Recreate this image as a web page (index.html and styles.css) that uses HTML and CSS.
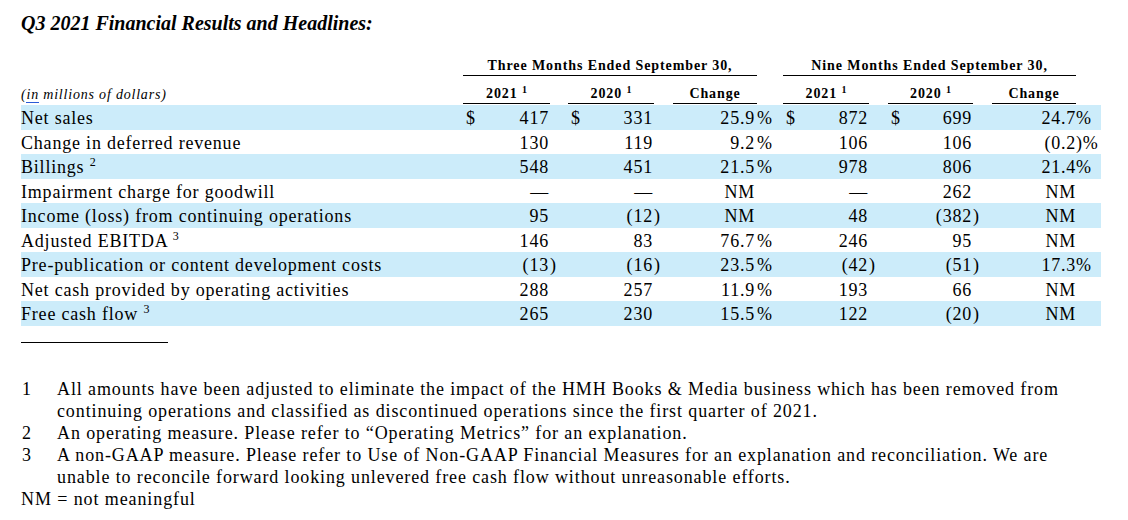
FILE: index.html
```html
<!DOCTYPE html>
<html>
<head>
<meta charset="utf-8">
<link rel="stylesheet" href="styles.css">
</head>
<body>
<div class="page">
  <h1 class="title">Q3 2021 Financial Results and Headlines:</h1>
  <table class="fin">
    <colgroup>
      <col class="c-label"><col class="c-num1"><col class="c-gap1"><col class="c-num2"><col class="c-gap2"><col class="c-chg"><col class="c-pct">
      <col class="c-num3"><col class="c-gap3"><col class="c-num4"><col class="c-gap4"><col class="c-chg2"><col class="c-pct2">
    </colgroup>
    <thead>
      <tr class="hr1">
        <th></th>
        <th colspan="5"><div class="ul">Three Months Ended September 30,</div></th>
        <th></th>
        <th colspan="5"><div class="ul">Nine Months Ended September 30,</div></th>
        <th></th>
      </tr>
      <tr class="hr2">
        <th class="units"><span class="mark">in</span> millions of dollars)</th>
        <th><div class="ul">2021 <sup>1</sup></div></th>
        <th></th>
        <th><div class="ul">2020 <sup>1</sup></div></th>
        <th></th>
        <th><div class="ul">Change</div></th>
        <th></th>
        <th><div class="ul">2021 <sup>1</sup></div></th>
        <th></th>
        <th><div class="ul">2020 <sup>1</sup></div></th>
        <th></th>
        <th><div class="ul">Change</div></th>
        <th></th>
      </tr>
    </thead>
    <tbody>
      <tr class="shade">
        <td class="label">Net sales</td>
        <td class="num"><span class="cur">$</span>417</td><td class="sfx"></td>
        <td class="num"><span class="cur">$</span>331</td><td class="sfx"></td>
        <td class="num chg">25.9</td><td class="sfx pct">%</td>
        <td class="num"><span class="cur">$</span>872</td><td class="sfx"></td>
        <td class="num"><span class="cur">$</span>699</td><td class="sfx"></td>
        <td class="num chg2">24.7</td><td class="sfx pct2">%</td>
      </tr>
      <tr>
        <td class="label">Change in deferred revenue</td>
        <td class="num">130</td><td class="sfx"></td>
        <td class="num">119</td><td class="sfx"></td>
        <td class="num chg">9.2</td><td class="sfx pct">%</td>
        <td class="num">106</td><td class="sfx"></td>
        <td class="num">106</td><td class="sfx"></td>
        <td class="num chg2">(0.2</td><td class="sfx pct2">)%</td>
      </tr>
      <tr class="shade">
        <td class="label">Billings <sup>2</sup></td>
        <td class="num">548</td><td class="sfx"></td>
        <td class="num">451</td><td class="sfx"></td>
        <td class="num chg">21.5</td><td class="sfx pct">%</td>
        <td class="num">978</td><td class="sfx"></td>
        <td class="num">806</td><td class="sfx"></td>
        <td class="num chg2">21.4</td><td class="sfx pct2">%</td>
      </tr>
      <tr>
        <td class="label">Impairment charge for goodwill</td>
        <td class="num">—</td><td class="sfx"></td>
        <td class="num">—</td><td class="sfx"></td>
        <td class="num chg">NM</td><td class="sfx pct"></td>
        <td class="num">—</td><td class="sfx"></td>
        <td class="num">262</td><td class="sfx"></td>
        <td class="num chg2">NM</td><td class="sfx pct2"></td>
      </tr>
      <tr class="shade">
        <td class="label">Income (loss) from continuing operations</td>
        <td class="num">95</td><td class="sfx"></td>
        <td class="num">(12</td><td class="sfx">)</td>
        <td class="num chg">NM</td><td class="sfx pct"></td>
        <td class="num">48</td><td class="sfx"></td>
        <td class="num">(382</td><td class="sfx">)</td>
        <td class="num chg2">NM</td><td class="sfx pct2"></td>
      </tr>
      <tr>
        <td class="label">Adjusted EBITDA <sup>3</sup></td>
        <td class="num">146</td><td class="sfx"></td>
        <td class="num">83</td><td class="sfx"></td>
        <td class="num chg">76.7</td><td class="sfx pct">%</td>
        <td class="num">246</td><td class="sfx"></td>
        <td class="num">95</td><td class="sfx"></td>
        <td class="num chg2">NM</td><td class="sfx pct2"></td>
      </tr>
      <tr class="shade">
        <td class="label">Pre-publication or content development costs</td>
        <td class="num">(13</td><td class="sfx">)</td>
        <td class="num">(16</td><td class="sfx">)</td>
        <td class="num chg">23.5</td><td class="sfx pct">%</td>
        <td class="num">(42</td><td class="sfx">)</td>
        <td class="num">(51</td><td class="sfx">)</td>
        <td class="num chg2">17.3</td><td class="sfx pct2">%</td>
      </tr>
      <tr>
        <td class="label">Net cash provided by operating activities</td>
        <td class="num">288</td><td class="sfx"></td>
        <td class="num">257</td><td class="sfx"></td>
        <td class="num chg">11.9</td><td class="sfx pct">%</td>
        <td class="num">193</td><td class="sfx"></td>
        <td class="num">66</td><td class="sfx"></td>
        <td class="num chg2">NM</td><td class="sfx pct2"></td>
      </tr>
      <tr class="shade">
        <td class="label">Free cash flow <sup>3</sup></td>
        <td class="num">265</td><td class="sfx"></td>
        <td class="num">230</td><td class="sfx"></td>
        <td class="num chg">15.5</td><td class="sfx pct">%</td>
        <td class="num">122</td><td class="sfx"></td>
        <td class="num">(20</td><td class="sfx">)</td>
        <td class="num chg2">NM</td><td class="sfx pct2"></td>
      </tr>
    </tbody>
  </table>
  <div class="rule"></div>
  <ol class="notes">
    <li><span class="n">1</span><span class="t">All amounts have been adjusted to eliminate the impact of the HMH Books &amp; Media business which has been removed from continuing operations and classified as discontinued operations since the first quarter of 2021.</span></li>
    <li><span class="n">2</span><span class="t">An operating measure. Please refer to “Operating Metrics” for an explanation.</span></li>
    <li><span class="n">3</span><span class="t">A non-GAAP measure. Please refer to Use of Non-GAAP Financial Measures for an explanation and reconciliation. We are unable to reconcile forward looking unlevered free cash flow without unreasonable efforts.</span></li>
  </ol>
  <p class="nm">NM = not meaningful</p>
</div>
</body>
</html>
```

FILE: styles.css
```css
html, body {
  margin: 0;
  padding: 0;
  background: #ffffff;
  color: #000000;
  font-family: "Liberation Serif", "Times New Roman", serif;
}

.page {
  padding-left: 21px;
  width: 1080px;
}

.title {
  margin: 0;
  padding-top: 11px;
  height: 24px;
  line-height: 24px;
  font-size: 20px;
  font-weight: bold;
  font-style: italic;
}

.fin {
  border-collapse: separate;
  border-spacing: 0;
  table-layout: fixed;
  width: 1080px;
}

.c-label { width: 442px; }
.c-num1 { width: 87px; }
.c-gap1 { width: 18px; }
.c-num2 { width: 86px; }
.c-gap2 { width: 19px; }
.c-chg { width: 84px; }
.c-pct { width: 26px; }
.c-num3 { width: 86px; }
.c-gap3 { width: 19px; }
.c-num4 { width: 85px; }
.c-gap4 { width: 19px; }
.c-chg2 { width: 84px; }
.c-pct2 { width: 25px; }

.fin th {
  padding: 0;
  font-size: 14px;
  font-weight: bold;
  letter-spacing: 0.9px;
  vertical-align: bottom;
  text-align: center;
  white-space: nowrap;
}

.fin .ul {
  border-bottom: 1px solid #000;
  line-height: 16px;
}

.hr1 th {
  height: 41px;
  padding-bottom: 2px;
}

.hr1 .ul { padding-bottom: 1px; }

.hr2 th {
  height: 26px;
  padding-bottom: 1px;
}

.hr2 .ul { padding-bottom: 1px; }

.fin sup {
  font-size: 10px;
  line-height: 0;
  vertical-align: 5px;
  font-weight: normal;
  letter-spacing: 0;
}

.fin .ul sup { font-weight: bold; }

.fin .hr2 th.units {
  text-align: left;
  font-weight: normal;
  font-style: italic;
  letter-spacing: 0.8px;
  line-height: 16px;
  height: 25px;
  padding-bottom: 2px;
}

.units .mark {
  border-bottom: 1px solid #2a5bd7;
}

.units::before { content: "("; }

.fin td {
  padding: 2px 0 0 0;
  height: 22.5px;
  line-height: 22.5px;
  font-size: 18px;
  letter-spacing: 0.8px;
  white-space: nowrap;
  vertical-align: top;
}

.fin tr.shade td { background: #ccecfa; }

.fin td.num {
  text-align: right;
  padding-right: 1px;
}

.fin td.chg { padding-right: 2px; }
.fin td.pct { padding-left: 0; }
.fin td.chg2 { padding-right: 0; }

.fin td.sfx { text-align: left; }

.cur {
  float: left;
  padding-left: 3px;
}

.fin td sup {
  font-size: 12px;
  vertical-align: 7px;
}

.rule {
  margin-top: 16px;
  width: 147px;
  border-top: 1px solid #000;
}

.notes {
  list-style: none;
  margin: 35px 0 0 0;
  padding: 0;
  font-size: 18px;
  line-height: 22px;
  letter-spacing: 0.88px;
}

.notes li {
  display: flex;
}

.notes .n {
  flex: 0 0 35px;
  padding-left: 1px;
}

.notes .t {
  flex: 1;
  max-width: 1015px;
}

.nm {
  margin: 0;
  font-size: 18px;
  line-height: 22px;
  letter-spacing: 0.9px;
}
```
